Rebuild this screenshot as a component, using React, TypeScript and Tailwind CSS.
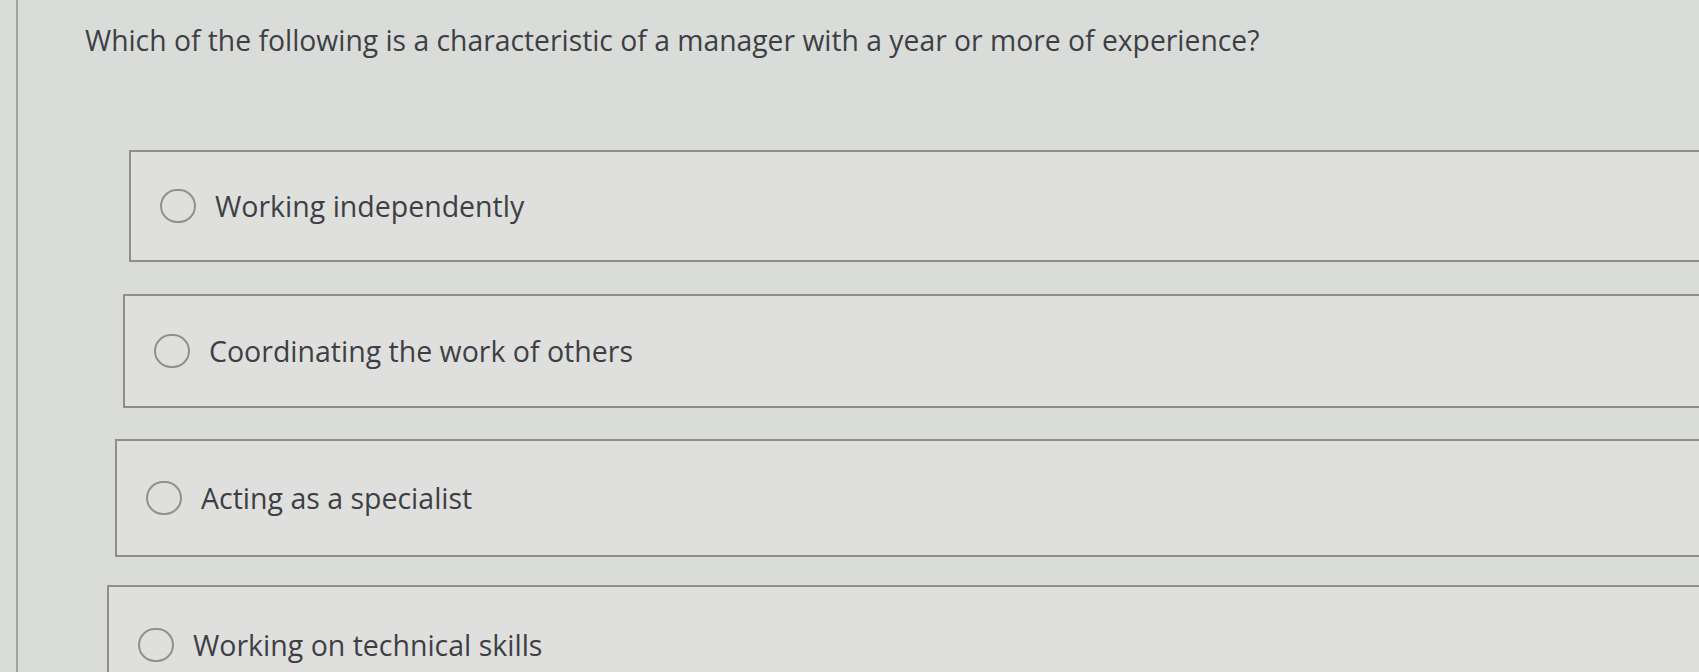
import React from "react";

const options = [
  { label: "Working independently", row: "ml-[111px] h-[112px] mt-[92px]" },
  { label: "Coordinating the work of others", row: "ml-[105px] h-[114px] mt-[32px]" },
  { label: "Acting as a specialist", row: "ml-[97px] h-[118px] mt-[31px]" },
  { label: "Working on technical skills", row: "ml-[89px] h-[120px] mt-[28px]" },
];

function Radio() {
  return <span className="shrink-0 w-[36px] h-[34px] rounded-full border-2 border-[#90918f]" />;
}

export default function App() {
  return (
    <div
      className="h-[672px] w-full overflow-hidden bg-[#dadcd9] text-[#3e3f45]"
      style={{ fontFamily: '"Open Sans", "Noto Sans", sans-serif' }}
    >
      <div className="flex h-full">
        {/* left edge of the screen frame */}
        <div className="w-[18px] shrink-0 border-r-2 border-[#a3a4a2]" />

        <div className="flex-1 flex flex-col">
          <h1 className="ml-[67px] pt-[22px] text-[28.3px] leading-[36px] font-normal">
            Which of the following is a characteristic of a manager with a year or more of experience?
          </h1>

          {options.map((o) => (
            <div
              key={o.label}
              className={`${o.row} shrink-0 -mr-6 flex items-center gap-[19px] pl-[29px] bg-[#dfe0dd] border-2 border-[#8e8f8d]`}
            >
              <Radio />
              <span className="text-[28.5px] leading-none">{o.label}</span>
            </div>
          ))}
        </div>
      </div>
    </div>
  );
}
